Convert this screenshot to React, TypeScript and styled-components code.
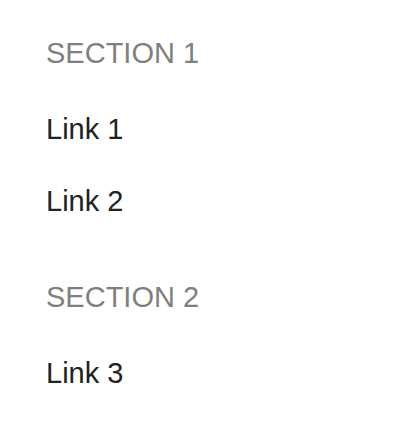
import React from "react";
import styled, { createGlobalStyle } from "styled-components";

const GlobalStyle = createGlobalStyle`
  html, body {
    margin: 0;
    padding: 0;
    background: #ffffff;
  }
  body {
    font-family: "Liberation Sans", Arial, Helvetica, sans-serif;
    -webkit-font-smoothing: antialiased;
  }
`;

const sections = [
  { title: "Section 1", links: ["Link 1", "Link 2"] },
  { title: "Section 2", links: ["Link 3"] },
];

const Nav = styled.nav`
  display: flex;
  flex-direction: column;
  gap: 20px;
  padding: 13px 46px;
`;

const Section = styled.section`
  display: flex;
  flex-direction: column;
`;

const SectionTitle = styled.h3`
  margin: 0;
  font-size: 29px;
  font-weight: 400;
  line-height: 80px;
  text-transform: uppercase;
  color: #7f7f7f;
`;

const LinkList = styled.ul`
  list-style: none;
  margin: 0;
  padding: 0;
`;

const NavLink = styled.a`
  display: block;
  font-size: 29px;
  line-height: 72px;
  color: #222222;
  text-decoration: none;
`;

export default function App() {
  return (
    <>
      <GlobalStyle />
      <Nav>
        {sections.map((section) => (
          <Section key={section.title}>
            <SectionTitle>{section.title}</SectionTitle>
            <LinkList>
              {section.links.map((link) => (
                <li key={link}>
                  <NavLink href="#">{link}</NavLink>
                </li>
              ))}
            </LinkList>
          </Section>
        ))}
      </Nav>
    </>
  );
}
